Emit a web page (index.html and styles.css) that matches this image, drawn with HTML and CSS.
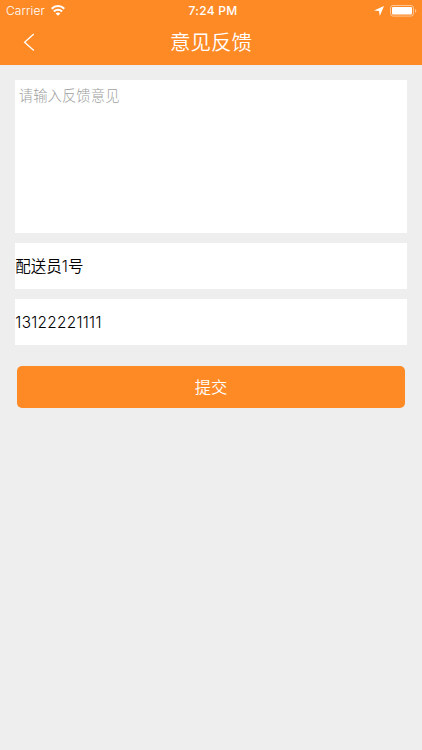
FILE: index.html
```html
<!DOCTYPE html>
<html lang="zh-CN">
<head>
<meta charset="UTF-8">
<meta name="viewport" content="width=device-width, initial-scale=1.0">
<title>意见反馈</title>
<link rel="stylesheet" href="styles.css">
</head>
<body>
<header class="header">
    <div class="status-bar">
        <div class="status-left">
            <span class="carrier">Carrier</span>
            <svg class="wifi" width="14" height="11" viewBox="0 0 14 11" fill="none" stroke="#fff" stroke-width="2">
                <path d="M0.7 3.8C4.2 0.2 9.8 0.2 13.3 3.8"/>
                <path d="M2.9 6.5C5.2 4.2 8.8 4.2 11.1 6.5"/>
                <path d="M7 10.8L4.7 8.5C5.9 7.2 8.1 7.2 9.3 8.5Z" fill="#fff" stroke="none"/>
            </svg>
        </div>
        <span class="time">7:24 PM</span>
        <div class="status-right">
            <svg class="location" width="10" height="10" viewBox="0 0 9 9" fill="#fff">
                <path d="M9 0L5.2 9L4.5 4.6L0 4Z"/>
            </svg>
            <svg class="battery" width="27" height="12" viewBox="0 0 27 12">
                <rect x="0.5" y="0.5" width="23" height="10.6" rx="2.5" fill="none" stroke="#fff" stroke-opacity="0.5"/>
                <rect x="2" y="2" width="20" height="7.6" rx="1" fill="#fff"/>
                <path d="M25 4C26.8 4.7 26.8 7 25 7.7Z" fill="#fff" fill-opacity="0.5"/>
            </svg>
        </div>
    </div>
    <div class="nav-bar">
        <button class="back-button" aria-label="返回">
            <svg width="12" height="18" viewBox="0 0 12 18" fill="none" stroke="#fff" stroke-width="1.3">
                <path d="M10.8 1.1L1.6 9.3L10.8 17.5"/>
            </svg>
        </button>
        <h1 class="title">意见反馈</h1>
    </div>
</header>
<form class="feedback-form">
    <textarea class="feedback-text" placeholder="请输入反馈意见"></textarea>
    <input class="field name" type="text" value="配送员1号">
    <input class="field phone" type="tel" value="13122221111">
    <button class="submit-button" type="button">提交</button>
</form>
</body>
</html>
```
FILE: styles.css
```css
body {
    margin: 0;
    min-height: 100vh;
    background-color: #eeeeee;
    font-family: Inter, "Noto Sans CJK SC", sans-serif;
}
.header {
    height: 65.4px;
    background-color: #fe8a26;
    color: white;
}
.status-bar {
    display: grid;
    grid-template-columns: 1fr auto 1fr;
    align-items: center;
    height: 21px;
    padding: 0 5px 0 6px;
    box-sizing: border-box;
}
.status-left {
    display: flex;
    align-items: center;
    gap: 6px;
}
.carrier {
    font-size: 12px;
    font-weight: 300;
    letter-spacing: 0.1px;
}
.time {
    padding-left: 3px;
    font-size: 12px;
    font-weight: 500;
    letter-spacing: 0.3px;
}
.status-right {
    display: flex;
    justify-content: flex-end;
    align-items: center;
    gap: 6px;
}
.nav-bar {
    display: grid;
    grid-template-columns: 48px 1fr 48px;
    align-items: center;
    height: 42px;
}
.back-button {
    display: flex;
    padding: 0 0 0 23px;
    border: none;
    background: none;
}
.title {
    margin: 0;
    padding-top: 2px;
    font-size: 20.5px;
    font-weight: 350;
    line-height: 30px;
    text-align: center;
}
.feedback-form {
    display: flex;
    flex-direction: column;
    gap: 10px;
    padding: 15px 15.3px;
}
.feedback-text,
.field {
    box-sizing: border-box;
    border: none;
    border-radius: 0;
    outline: none;
    background-color: white;
    color: black;
    font-family: inherit;
}
.feedback-text {
    height: 153px;
    padding: 5px 3.5px;
    font-size: 14.4px;
    font-weight: 300;
    line-height: 21px;
    resize: none;
}
.feedback-text::placeholder {
    color: #a0a0a0;
}
.field {
    height: 46px;
    padding: 0;
    font-size: 15.5px;
    font-weight: 350;
}
.name {
    padding-bottom: 2px;
}
.phone {
    font-size: 15.3px;
    letter-spacing: 0.32px;
}
.submit-button {
    height: 42px;
    margin: 10.2px 2px 0;
    padding: 0 0 1px;
    border: none;
    border-radius: 5px;
    background-color: #fe8a26;
    color: white;
    font-family: inherit;
    font-size: 16.3px;
    font-weight: 350;
}
```
